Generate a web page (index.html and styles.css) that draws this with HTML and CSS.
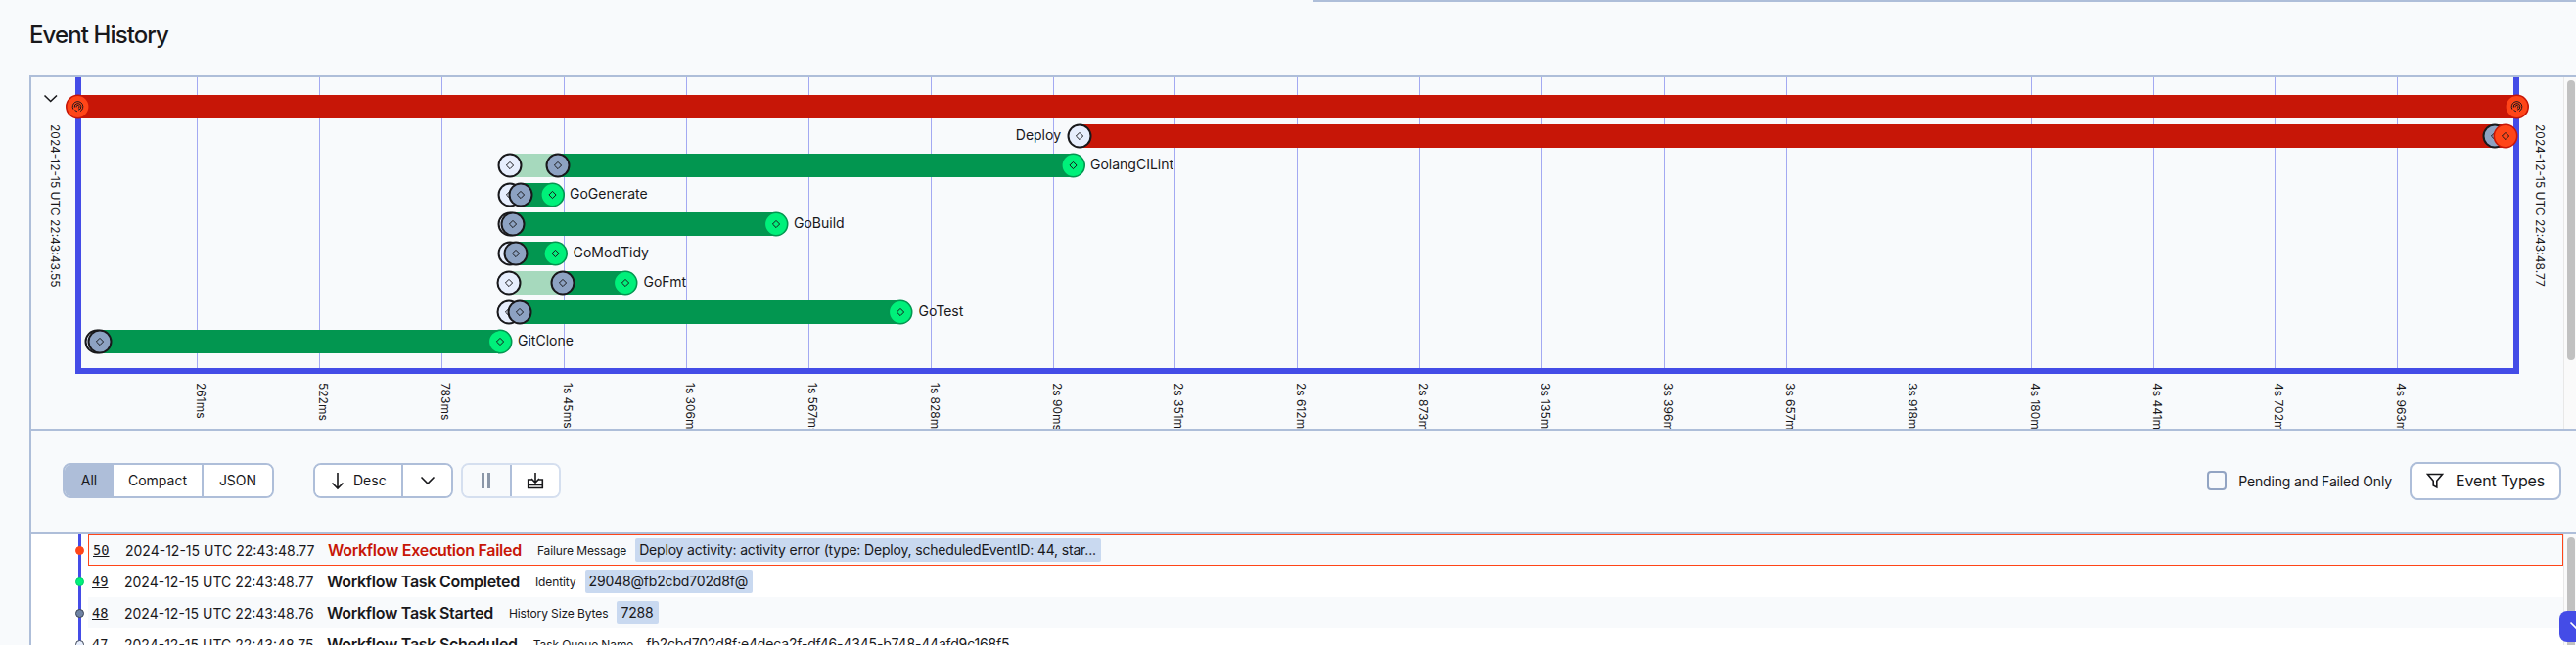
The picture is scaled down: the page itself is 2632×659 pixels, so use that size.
FILE: index.html
```html
<!DOCTYPE html>
<html lang="en">
<head>
<meta charset="utf-8">
<title>Event History</title>
<link rel="stylesheet" href="styles.css">
</head>
<body>
<div class="topline"></div>
<h1 class="title">Event History</h1>
<section class="panel">
  <div class="graph">
    <svg class="chart" viewBox="32 79 2587 359" width="2587" height="359" xmlns="http://www.w3.org/2000/svg">
      <defs>
        <g id="diamond"><path class="dia" d="M0-3.6 3.6 0 0 3.6-3.6 0Z"/></g>
        <g id="mw"><circle class="c-white" r="11.5"/><use href="#diamond"/></g>
        <g id="mg"><circle class="c-gray" r="11.5"/><use href="#diamond"/></g>
        <g id="me"><circle class="c-green" r="11.7"/><use href="#diamond"/></g>
        <g id="mr"><circle class="c-red" r="11.7"/><use href="#diamond"/></g>
        <g id="mf">
          <circle class="c-red" r="11.7"/>
          <g class="print">
            <path d="M-4.6 2.6A5.3 5.3 0 1 1 2.6 4.6"/>
            <path d="M-3.2 .6A3.3 3.3 0 1 1 .6 3.2"/>
            <path d="M-1.4 .4A1.5 1.5 0 1 1 .4 1.4"/>
            <path d="M-3 3.6 -.6 4.8"/>
          </g>
        </g>
      </defs>

      <g class="grid">
        <path d="M201.5 79V376M326.5 79V376M451.5 79V376M576.5 79V376M701.5 79V376M826.5 79V376M951.5 79V376M1076.5 79V376M1200.5 79V376M1325.5 79V376M1450.5 79V376M1575.5 79V376M1700.5 79V376M1825.5 79V376M1950.5 79V376M2075.5 79V376M2200.5 79V376M2324.5 79V376M2449.5 79V376"/>
      </g>

      <path class="axis" d="M80 79V379H2571V79"/>
      <path class="chev" d="M45.5 97.5 51.7 103.5 58 97.5"/>

      <text class="tick" transform="translate(52 127) rotate(90)">2024-12-15 UTC 22:43:43.55</text>
      <text class="tick" transform="translate(2591 127) rotate(90)">2024-12-15 UTC 22:43:48.77</text>

      <rect class="bar-red" x="79" y="97" width="2493" height="24"/>
      <use href="#mf" x="79.5" y="109"/>
      <use href="#mf" x="2571.5" y="109"/>

      <text class="lbl end" x="1084" y="143.3">Deploy</text>
      <rect class="bar-red" x="1103" y="127" width="1457" height="24"/>
      <use href="#mw" x="1103" y="139"/>
      <use href="#mg" x="2549" y="139"/>
      <use href="#mr" x="2560" y="139"/>

      <rect class="bar-light" x="521" y="157" width="49" height="24"/>
      <rect class="bar-green" x="570" y="157" width="527" height="24"/>
      <use href="#mw" x="521" y="169"/>
      <use href="#mg" x="570" y="169"/>
      <use href="#me" x="1096.5" y="169"/>
      <text class="lbl" x="1114" y="173.3">GolangCILint</text>

      <rect class="bar-green" x="532" y="187" width="32" height="24"/>
      <use href="#mw" x="521" y="199"/>
      <use href="#mg" x="532" y="199"/>
      <use href="#me" x="564.5" y="199"/>
      <text class="lbl" x="582" y="203.3">GoGenerate</text>

      <rect class="bar-green" x="524" y="217" width="269" height="24"/>
      <use href="#mw" x="521" y="229"/>
      <use href="#mg" x="524" y="229"/>
      <use href="#me" x="793" y="229"/>
      <text class="lbl" x="811" y="233.3">GoBuild</text>

      <rect class="bar-green" x="527" y="247" width="40" height="24"/>
      <use href="#mw" x="521" y="259"/>
      <use href="#mg" x="527" y="259"/>
      <use href="#me" x="567.5" y="259"/>
      <text class="lbl" x="585.5" y="263.3">GoModTidy</text>

      <rect class="bar-light" x="520" y="277" width="55" height="24"/>
      <rect class="bar-green" x="575" y="277" width="64" height="24"/>
      <use href="#mw" x="520" y="289"/>
      <use href="#mg" x="575" y="289"/>
      <use href="#me" x="639" y="289"/>
      <text class="lbl" x="657.5" y="293.3">GoFmt</text>

      <rect class="bar-green" x="531" y="307" width="389" height="24"/>
      <use href="#mw" x="520" y="319"/>
      <use href="#mg" x="531" y="319"/>
      <use href="#me" x="920" y="319"/>
      <text class="lbl" x="938.5" y="323.3">GoTest</text>

      <rect class="bar-green" x="102" y="337" width="409" height="24"/>
      <use href="#mw" x="99" y="349"/>
      <use href="#mg" x="102" y="349"/>
      <use href="#me" x="511" y="349"/>
      <text class="lbl" x="529" y="353.3">GitClone</text>

      <g class="ticks">
        <text class="tick" transform="translate(201 391) rotate(90)">261ms</text>
        <text class="tick" transform="translate(326 391) rotate(90)">522ms</text>
        <text class="tick" transform="translate(451 391) rotate(90)">783ms</text>
        <text class="tick" transform="translate(576 391) rotate(90)">1s 45ms</text>
        <text class="tick" transform="translate(701 391) rotate(90)">1s 306ms</text>
        <text class="tick" transform="translate(826 391) rotate(90)">1s 567ms</text>
        <text class="tick" transform="translate(951 391) rotate(90)">1s 828ms</text>
        <text class="tick" transform="translate(1076 391) rotate(90)">2s 90ms</text>
        <text class="tick" transform="translate(1200 391) rotate(90)">2s 351ms</text>
        <text class="tick" transform="translate(1325 391) rotate(90)">2s 612ms</text>
        <text class="tick" transform="translate(1450 391) rotate(90)">2s 873ms</text>
        <text class="tick" transform="translate(1575 391) rotate(90)">3s 135ms</text>
        <text class="tick" transform="translate(1700 391) rotate(90)">3s 396ms</text>
        <text class="tick" transform="translate(1825 391) rotate(90)">3s 657ms</text>
        <text class="tick" transform="translate(1950 391) rotate(90)">3s 918ms</text>
        <text class="tick" transform="translate(2075 391) rotate(90)">4s 180ms</text>
        <text class="tick" transform="translate(2200 391) rotate(90)">4s 441ms</text>
        <text class="tick" transform="translate(2324 391) rotate(90)">4s 702ms</text>
        <text class="tick" transform="translate(2449 391) rotate(90)">4s 963ms</text>
      </g>
    </svg>
    <div class="scrollbar"><div class="thumb thumb-graph"></div></div>
  </div>

  <div class="toolbar">
    <div class="seg">
      <button class="btn btn-all">All</button>
      <button class="btn btn-compact">Compact</button>
      <button class="btn btn-json">JSON</button>
    </div>
    <div class="seg seg-sort">
      <button class="btn btn-desc">
        <svg class="ico" viewBox="0 0 16 20" width="16" height="20"><path d="M8 2V18M2.5 12.5 8 18 13.5 12.5"/></svg>
        Desc
      </button>
      <button class="btn btn-chev">
        <svg class="ico" viewBox="0 0 16 10" width="16" height="10"><path d="M1.5 1.5 8 8 14.5 1.5"/></svg>
      </button>
    </div>
    <div class="seg seg-actions">
      <button class="btn btn-pause">
        <svg viewBox="0 0 10 16" width="10" height="16"><path class="pause" d="M1.5 0V16M7.5 0V16"/></svg>
      </button>
      <button class="btn btn-dl">
        <svg class="ico" viewBox="0 0 18 18" width="18" height="18"><path d="M9 1V10.5M5 7 9 11 13 7M6 8H1.7V16.5H16.3V8H12M1.7 13.5H16.3"/></svg>
      </button>
    </div>
    <label class="check"><span class="box"></span>Pending and Failed Only</label>
    <button class="btn-types">
      <svg class="ico" viewBox="0 0 18 18" width="18" height="18"><path d="M1.5 2.5H16.5L10.8 9.3V16L7.2 14V9.3Z"/></svg>
      Event Types
    </button>
  </div>

  <div class="list">
    <div class="rows">
      <div class="row-wrap">
        <div class="gutter"><span class="dot dot-red"></span></div>
        <div class="row row-failed">
          <a class="num">50</a><span class="time">2024-12-15 UTC 22:43:48.77</span>
          <span class="name name-failed">Workflow Execution Failed</span>
          <span class="key">Failure Message</span>
          <span class="val">Deploy activity: activity error (type: Deploy, scheduledEventID: 44, star...</span>
        </div>
      </div>
      <div class="row-wrap">
        <div class="gutter"><span class="dot dot-green"></span></div>
        <div class="row">
          <a class="num">49</a><span class="time">2024-12-15 UTC 22:43:48.77</span>
          <span class="name">Workflow Task Completed</span>
          <span class="key">Identity</span>
          <span class="val">29048@fb2cbd702d8f@</span>
        </div>
      </div>
      <div class="row-wrap">
        <div class="gutter"><span class="dot dot-gray"></span></div>
        <div class="row row-alt">
          <a class="num">48</a><span class="time">2024-12-15 UTC 22:43:48.76</span>
          <span class="name">Workflow Task Started</span>
          <span class="key">History Size Bytes</span>
          <span class="val">7288</span>
        </div>
      </div>
      <div class="row-wrap">
        <div class="gutter"><span class="dot dot-white"></span></div>
        <div class="row">
          <a class="num">47</a><span class="time">2024-12-15 UTC 22:43:48.75</span>
          <span class="name">Workflow Task Scheduled</span>
          <span class="key">Task Queue Name</span>
          <span class="val val-plain">fb2cbd702d8f:e4deca2f-df46-4345-b748-44afd9c168f5</span>
        </div>
      </div>
    </div>
    <div class="scrollbar"><div class="thumb thumb-list"></div></div>
    <button class="to-top" aria-label="Scroll">
      <svg viewBox="0 0 16 10" width="16" height="10"><path d="M1.5 1.5 8 8 14.5 1.5"/></svg>
    </button>
  </div>
</section>
</body>
</html>
```

FILE: styles.css
```css
* { box-sizing: border-box; }

html, body {
  margin: 0;
  height: 659px;
  overflow: hidden;
}

body {
  background: #f8fafc;
  color: #18181b;
  font-family: Inter, "Noto Sans", sans-serif;
}

.topline {
  height: 2px;
  margin-left: 1342px;
  background: #aebed9;
}

.title {
  margin: 0;
  padding: 19px 0 0 30px;
  height: 75px;
  font-size: 24px;
  line-height: 30px;
  font-weight: 500;
  letter-spacing: -0.9px;
}

.panel {
  margin-left: 30px;
  border-left: 2px solid #aebed9;
  border-top: 2px solid #aebed9;
}

.graph {
  display: flex;
  height: 361px;
  border-bottom: 2px solid #aebed9;
}

.chart {
  display: block;
  flex: none;
  overflow: hidden;
}

.grid path { stroke: #a3a9f2; stroke-width: 1; fill: none; }
.axis { fill: none; stroke: #444ce7; stroke-width: 6; stroke-linecap: square; }
.chev { fill: none; stroke: #18181b; stroke-width: 1.6; }

.tick { font-size: 12px; fill: #18181b; }
.lbl { font-size: 14px; fill: #18181b; }
.end { text-anchor: end; }

.bar-red { fill: #c71607; }
.bar-green { fill: #029650; }
.bar-light { fill: #a6d9bd; }

.c-white { fill: #e7eefd; stroke: #18181b; stroke-width: 2; }
.c-gray { fill: #8da2c2; stroke: #18181b; stroke-width: 2; }
.c-green { fill: #00f07a; stroke: #029650; stroke-width: 1.6; }
.c-red { fill: #ff4518; stroke: #c71607; stroke-width: 1.6; }
.dia { fill: none; stroke: #18181b; stroke-width: 1; }
.print path { fill: none; stroke: #18181b; stroke-width: 1; }

.scrollbar {
  flex: 1;
  background: #fafafa;
  border-left: 1px solid #e8e8e8;
  padding: 3px 1px 0 3px;
}

.thumb {
  background: #c1c1c1;
  border-radius: 4px;
}
.thumb-graph { height: 286px; }
.thumb-list { height: 120px; }

.toolbar {
  display: flex;
  align-items: center;
  height: 106px;
  padding: 0 15px 2px 32px;
  border-bottom: 2px solid #aebed9;
}

.seg {
  display: flex;
  height: 36px;
  border: 2px solid #aebed9;
  border-radius: 8px;
  overflow: hidden;
  background: #fff;
}

.seg-sort { margin-left: 40px; }
.seg-actions { margin-left: 8px; border-color: #d5dfef; background: #f8fafc; }

.btn {
  display: flex;
  align-items: center;
  justify-content: center;
  gap: 8px;
  height: 100%;
  padding: 0;
  border: 0;
  border-right: 2px solid #aebed9;
  background: #fff;
  color: #18181b;
  font: 14px/1 Inter, sans-serif;
}
.btn:last-child { border-right: 0; }

.btn-all { width: 50px; background: #aebed9; border-right: 0; }
.btn-compact { width: 92px; border-left: 0; }
.btn-json { width: 70px; }
.btn-desc { width: 90px; justify-content: flex-start; padding-left: 15px; }
.btn-chev { width: 49px; }
.btn-pause { width: 50px; background: #f8fafc; }
.btn-dl { width: 48px; }

.ico { fill: none; stroke: #18181b; stroke-width: 1.6; }
.ico path { fill: none; }
.pause { fill: none; stroke: #8b97a8; stroke-width: 3; }

.check {
  display: flex;
  align-items: center;
  gap: 12px;
  margin-left: auto;
  font-size: 14px;
  letter-spacing: -0.15px;
}

.box {
  width: 20px;
  height: 20px;
  border: 2px solid #92a4c3;
  border-radius: 4px;
  background: #f8fafc;
}

.btn-types {
  display: flex;
  align-items: center;
  justify-content: center;
  gap: 12px;
  width: 155px;
  height: 39px;
  margin-left: 18px;
  border: 2px solid #aebed9;
  border-radius: 8px;
  background: #fff;
  color: #18181b;
  font: 16px/1 Inter, sans-serif;
  letter-spacing: -0.15px;
}

.list {
  position: relative;
  display: flex;
  height: 114px;
  background: #fff;
  overflow: hidden;
}

.rows {
  width: 2587px;
  flex: none;
}

.row-wrap {
  display: flex;
  height: 32px;
}

.gutter {
  display: flex;
  align-items: center;
  flex: none;
  width: 58px;
  padding-left: 45px;
  background: linear-gradient(#444ce7, #444ce7) no-repeat 48px 0 / 3px 100%;
}

.dot {
  width: 9px;
  height: 9px;
  border-radius: 50%;
  border: 1px solid #18181b;
}
.dot-red { background: #ff4518; border-color: #ff4518; }
.dot-green { background: #00f07a; border-color: #00d06a; }
.dot-gray { background: #6f83a3; border-color: #3d4656; }
.dot-white { background: #e7eefd; border-color: #3d4656; }

.row {
  display: flex;
  align-items: center;
  flex: 1;
  padding-left: 4px;
  background: #fff;
  font-size: 14px;
  white-space: nowrap;
}
.row-alt { background: #f8fafc; }
.row-failed {
  background: #f8fafc;
  border: 1px solid #ff4518;
}

.num {
  width: 33px;
  font-family: "DejaVu Sans Mono", monospace;
  font-size: 13.7px;
  text-decoration: underline;
}

.time { width: 207px; }

.name {
  font-size: 16px;
  font-weight: 600;
  letter-spacing: -0.28px;
}
.name-failed { color: #c71607; }

.key {
  margin-left: 16px;
  font-size: 12px;
  letter-spacing: -0.1px;
}

.val {
  margin-left: 9px;
  height: 24px;
  padding: 0 5px 0 4px;
  line-height: 24px;
  background: #c9d9f0;
  border-radius: 2px;
  letter-spacing: -0.17px;
}
.val-plain { background: none; }

.to-top {
  position: absolute;
  right: -8px;
  top: 78px;
  width: 25px;
  height: 32px;
  padding: 0 0 0 10px;
  border: 0;
  border-radius: 8px;
  background: #444ce7;
}
.to-top path { fill: none; stroke: #fff; stroke-width: 1.6; }
```
